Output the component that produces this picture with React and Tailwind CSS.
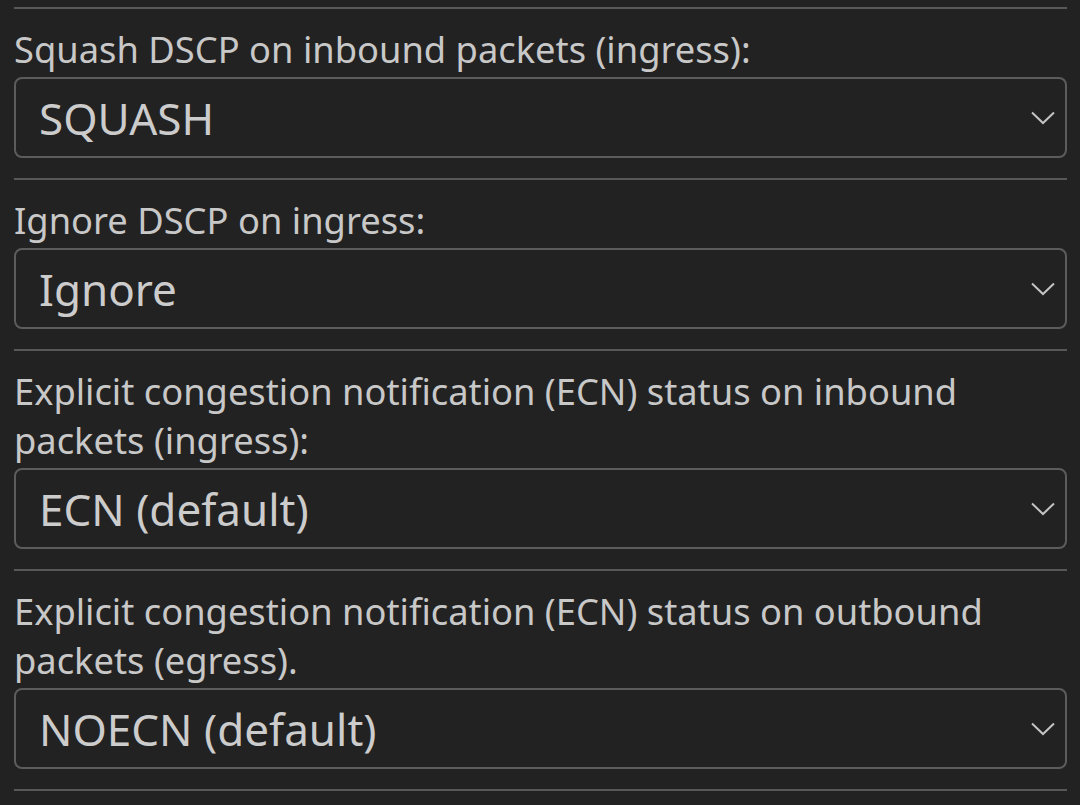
import React from "react";

const sections = [
  { label: "Squash DSCP on inbound packets (ingress):", value: "SQUASH" },
  { label: "Ignore DSCP on ingress:", value: "Ignore" },
  { label: "Explicit congestion notification (ECN) status on inbound packets (ingress):", value: "ECN (default)" },
  { label: "Explicit congestion notification (ECN) status on outbound packets (egress).", value: "NOECN (default)" },
];

function Chevron() {
  return (
    <svg width="24" height="14" viewBox="0 0 24 14" fill="none" className="shrink-0">
      <path d="M1 1.5 L12 12 L23 1.5" stroke="#c4c4c4" strokeWidth="2" />
    </svg>
  );
}

export default function App() {
  return (
    <div
      className="w-[1080px] h-[805px] overflow-hidden bg-[#222222] pl-[14px] pr-[13px] pt-[7px]"
      style={{ fontFamily: '"Noto Sans", sans-serif' }}
    >
      <div className="h-[2px] bg-[#585858]" />
      {sections.map((s) => (
        <div key={s.label} className="flex flex-col">
          <div className="pt-[16px] pb-[3px] text-[36.3px] leading-[49px] text-[#c8c8c8]">
            {s.label}
          </div>
          <div className="h-[81px] rounded-[8px] border-2 border-[#5c5c5c] flex items-center justify-between pl-[23px] pr-[10px]">
            <span className="text-[44px] text-[#cccccc] leading-none">{s.value}</span>
            <Chevron />
          </div>
          <div className="mt-[20px] h-[2px] bg-[#585858]" />
        </div>
      ))}
    </div>
  );
}
